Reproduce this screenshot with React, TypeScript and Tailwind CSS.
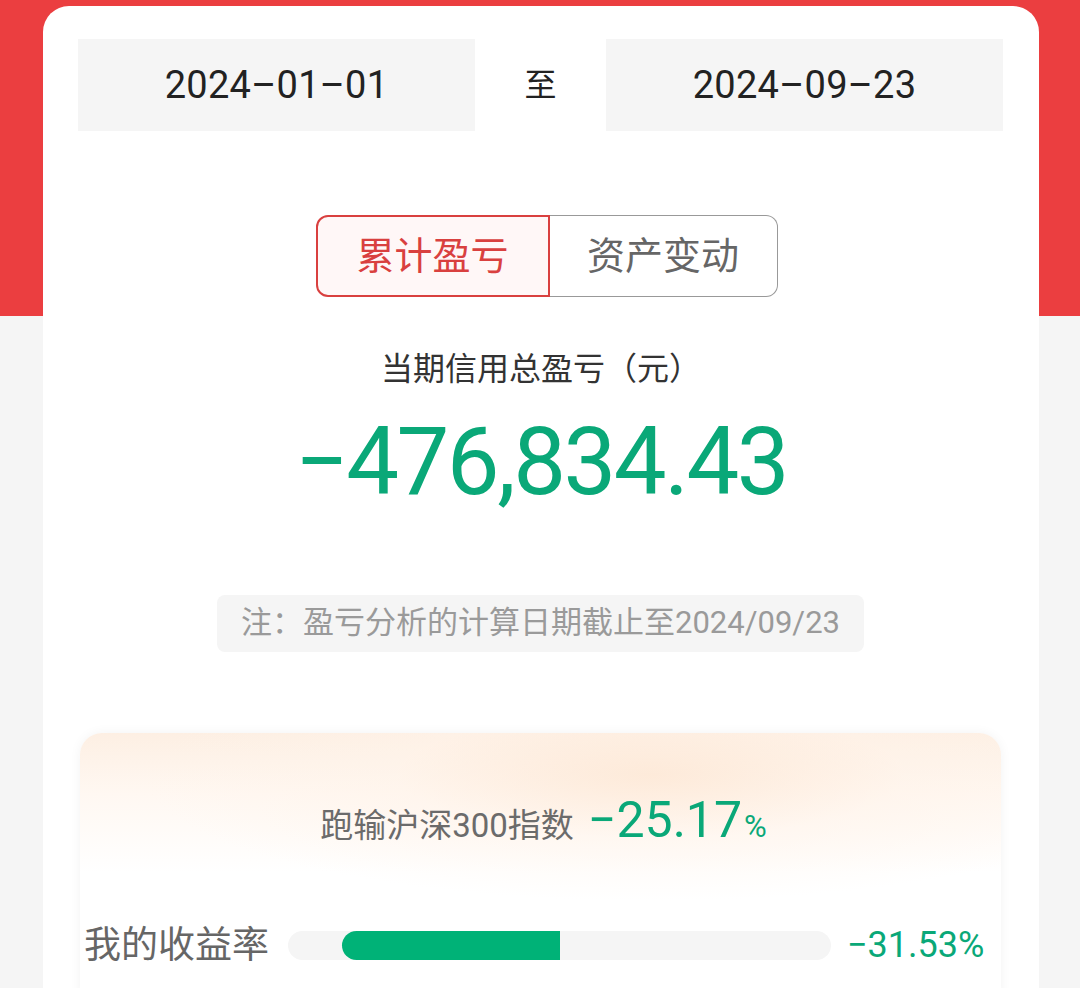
import React from 'react';

const font = { fontFamily: "Roboto, 'Noto Sans CJK SC', sans-serif" };

export default function App() {
  const track = 543;
  const half = track / 2;
  // bar grows left from the centre for a negative rate
  const fill = 218;

  return (
    <div className="relative min-h-[988px] w-[1080px] overflow-hidden bg-[#f5f5f5]" style={font}>
      <div className="h-[316px] bg-[#eb3e40]" />
      <div className="absolute left-[43px] top-[6px] h-[1100px] w-[996px] rounded-t-[26px] bg-white px-[35px] pt-[33px]">
        {/* date range */}
        <div className="grid grid-cols-[397px_131px_397px] text-[#222]">
          <div className="flex h-[92px] items-center justify-center bg-[#f5f5f5] text-[38px] tracking-[0.3px]">
            2024–01–01
          </div>
          <div className="flex items-center justify-center text-[32px]">至</div>
          <div className="flex h-[92px] items-center justify-center bg-[#f5f5f5] text-[38px] tracking-[0.3px]">
            2024–09–23
          </div>
        </div>

        {/* tabs */}
        <div className="mt-[84px] flex justify-center pl-[11px]">
          <div className="flex h-[82px] w-[234px] items-center justify-center rounded-l-[12px] border-2 border-[#d9403f] bg-[#fff7f7] text-[38px] text-[#d9403f]">
            累计盈亏
          </div>
          <div className="flex h-[82px] w-[228px] items-center justify-center rounded-r-[12px] border border-l-0 border-[#999] text-[38px] text-[#666]">
            资产变动
          </div>
        </div>

        <div className="mt-[50px] text-center text-[32px] leading-[44px] text-[#333]">当期信用总盈亏（元）</div>
        <div className="mt-[18px] text-center text-[94px] leading-[106px] tracking-[-2.5px] text-[#0aa878]">
          −476,834.43
        </div>

        <div className="mt-[80px] flex justify-center pr-[1px]">
          <div className="flex h-[57px] items-center rounded-[8px] bg-[#f5f5f5] px-[24px] text-[31px] text-[#9a9a9a]">
            注：盈亏分析的计算日期截止至2024/09/23
          </div>
        </div>

        {/* comparison card */}
        <div className="mt-[81px] ml-[2px] w-[921px] rounded-[22px] bg-[radial-gradient(ellipse_55%_45%_at_62%_15%,rgba(253,232,214,0.85)_0%,rgba(255,243,233,0.5)_50%,rgba(255,255,255,0)_100%),linear-gradient(180deg,#fdefe3_0%,#fff8f2_22%,#ffffff_50%)] px-[4px] pb-[40px] shadow-[0_0_12px_rgba(0,0,0,0.05)]">
          <div className="flex items-baseline justify-center pt-[57px] pl-[6px]">
            <span className="text-[33px] text-[#6b6b6b]">跑输沪深300指数</span>
            <span className="ml-[14px] text-[50px] leading-[60px] text-[#0aa878]">−25.17</span>
            <span className="ml-[2px] text-[31px] text-[#0aa878]">%</span>
          </div>
          <div className="mt-[67px] flex items-center">
            <span className="w-[204px] text-[37px] text-[#666]">我的收益率</span>
            <div className="relative h-[29px] shrink-0 rounded-full bg-[#f5f5f5]" style={{ width: track }}>
              <div
                className="absolute top-0 h-full rounded-l-full bg-[#00b277]"
                style={{ width: fill, left: half - fill }}
              />
            </div>
            <span className="ml-[16px] text-[36px] text-[#0aa878]">−31.53%</span>
          </div>
        </div>
      </div>
    </div>
  );
}
